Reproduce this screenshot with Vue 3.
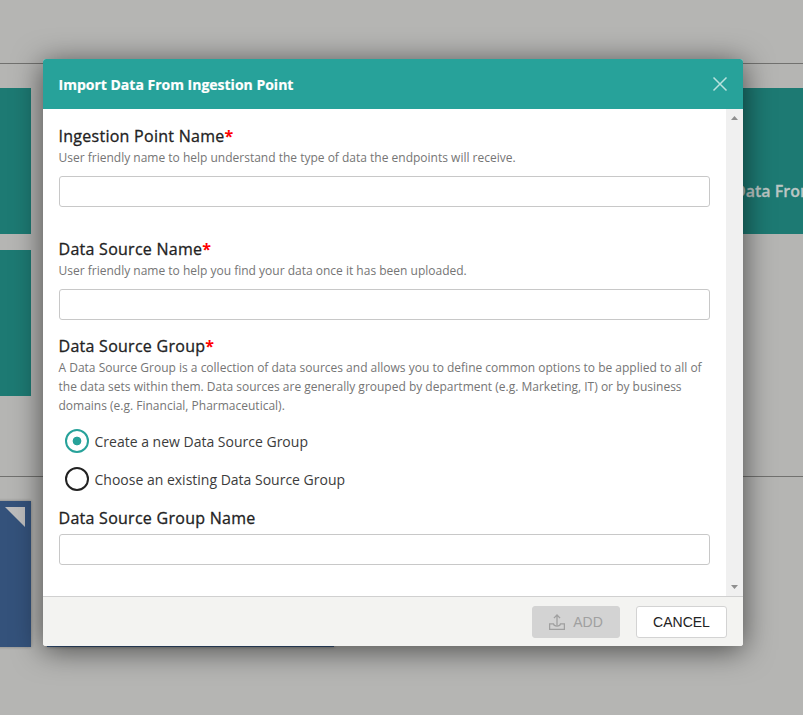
<script setup>
import { ref } from 'vue'

const ingestionName = ref('')
const sourceName = ref('')
const groupName = ref('')
const mode = ref('new')
const options = [
  { value: 'new', label: 'Create a new Data Source Group' },
  { value: 'existing', label: 'Choose an existing Data Source Group' },
]
</script>

<template>
  <div class="screen">
    <div class="page">
      <section class="group first">
        <div class="tiles">
          <div class="tile"></div>
          <div class="tile"></div>
          <div class="tile"></div>
          <div class="tile titled">Data From</div>
          <div class="tile"></div>
        </div>
      </section>
      <section class="group second">
        <div class="tiles">
          <div class="tile blue"><span class="corner"></span></div>
          <div class="tile blue"></div>
        </div>
      </section>
    </div>

    <div class="modal">
      <header class="head">
        <span>Import Data From Ingestion Point</span>
        <svg class="close" width="16" height="16" viewBox="0 0 16 16">
          <path d="M1.5 1.5 L14.5 14.5 M14.5 1.5 L1.5 14.5" fill="none" stroke="#b9e2de" stroke-width="1.5" />
        </svg>
      </header>

      <div class="body">
        <form class="form" @submit.prevent>
          <div class="field ingestion">
            <label class="label">Ingestion Point Name<b class="req">*</b></label>
            <p class="hint">User friendly name to help understand the type of data the endpoints will receive.</p>
            <input v-model="ingestionName" class="input" type="text" />
          </div>
          <div class="field source">
            <label class="label">Data Source Name<b class="req">*</b></label>
            <p class="hint">User friendly name to help you find your data once it has been uploaded.</p>
            <input v-model="sourceName" class="input" type="text" />
          </div>
          <div class="field">
            <label class="label">Data Source Group<b class="req">*</b></label>
            <p class="hint">A Data Source Group is a collection of data sources and allows you to define common options to be applied to all of the data sets within them. Data sources are generally grouped by department (e.g. Marketing, IT) or by business domains (e.g. Financial, Pharmaceutical).</p>
            <div class="radios">
              <div v-for="o in options" :key="o.value" class="radio" :class="{ on: mode === o.value }" @click="mode = o.value">
                <span class="ring"></span>
                <span>{{ o.label }}</span>
              </div>
            </div>
          </div>
          <div class="field name">
            <label class="label">Data Source Group Name</label>
            <input v-model="groupName" class="input" type="text" />
          </div>
        </form>
        <div class="scroll">
          <svg width="7" height="4" viewBox="0 0 7 4"><path d="M0 4 L3.5 0 L7 4 Z" fill="#8f8f8f" /></svg>
          <svg width="7" height="4" viewBox="0 0 7 4"><path d="M0 0 L3.5 4 L7 0 Z" fill="#8f8f8f" /></svg>
        </div>
      </div>

      <footer class="foot">
        <button class="btn add" disabled>
          <svg width="16" height="16" viewBox="0 0 16 16" fill="none" stroke="#a0a0a0" stroke-width="1.3">
            <path d="M8 11 V1.2 M4.9 4.1 L8 1 L11.1 4.1" />
            <path d="M.6 9.9 H4.5 C5 12.7 11 12.7 11.5 9.9 H15.4 V15.3 H.6 Z" />
          </svg>
          <span>ADD</span>
        </button>
        <button class="btn cancel">CANCEL</button>
      </footer>
    </div>
  </div>
</template>

<style>
body {
  margin: 0;
  background: #b5b5b3;
}
</style>

<style scoped>
.screen {
  position: relative;
  width: 803px;
  height: 715px;
  overflow: hidden;
  background: #b5b5b3;
  font-family: "Open Sans", sans-serif;
  color: #222;
}
.page {
  padding-top: 63px;
}
.group {
  border-top: 1px solid #71716f;
  padding-top: 24px;
}
.second {
  margin-top: 80px;
}
.tiles {
  display: grid;
  grid-template-columns: 288px 287px 288px 288px;
  grid-auto-rows: 146px;
  gap: 16px;
  margin-left: -257px;
}
.tile {
  box-sizing: border-box;
  background: #1d7a73;
}
.titled {
  padding: 92px 0 0 80px;
  font-size: 16px;
  line-height: 22px;
  font-weight: 600;
  color: #bcc6c4;
  -webkit-text-stroke: 0.3px #bcc6c4;
}
.blue {
  display: flex;
  justify-content: flex-end;
  padding: 6px;
  background: #34527b;
  box-shadow: 0 0 3px rgba(0, 0, 0, 0.3);
}
.corner {
  width: 20px;
  height: 20px;
  background: #bdbdbd;
  clip-path: polygon(0 0, 100% 0, 100% 100%);
}
.modal {
  position: absolute;
  left: 43px;
  top: 59px;
  width: 700px;
  height: 587px;
  display: flex;
  flex-direction: column;
  border-radius: 3px;
  overflow: hidden;
  background: #fff;
  box-shadow: 0 4px 30px rgba(0, 0, 0, 0.6);
}
.head {
  display: flex;
  align-items: center;
  justify-content: space-between;
  box-sizing: border-box;
  height: 50px;
  padding: 1px 15px 0 15.5px;
  background: #27a29a;
  color: #fff;
  font-size: 14px;
  font-weight: 700;
  -webkit-text-stroke: 0.2px #fff;
}
.close {
  display: block;
  margin-top: -1px;
}
.body {
  flex: 1;
  display: flex;
  min-height: 0;
}
.form {
  flex: 1;
  padding: 15px 16px 0;
}
.field {
  display: flex;
  flex-direction: column;
}
.ingestion {
  margin-bottom: 30px;
}
.source {
  margin-bottom: 14px;
}
.label {
  font-size: 16px;
  line-height: 24px;
  font-weight: 400;
  letter-spacing: 0.27px;
  margin-left: -0.5px;
  -webkit-text-stroke: 0.3px #222;
}
.req {
  color: #f00;
  font-weight: 700;
  -webkit-text-stroke: 0;
}
.hint {
  margin: 0 0 0 -0.5px;
  font-size: 12px;
  line-height: 19px;
  color: #757575;
}
.input {
  box-sizing: border-box;
  width: 651px;
  height: 31px;
  margin-top: 9px;
  padding: 0 8px;
  border: 1px solid #c8c8c8;
  border-radius: 3px;
  background: #fff;
  font: inherit;
  outline: none;
}
.radios {
  display: flex;
  flex-direction: column;
  gap: 14px;
  padding: 14px 6px 0;
}
.radio {
  display: flex;
  align-items: center;
  gap: 5.5px;
  height: 24px;
  font-size: 14px;
  color: #3c3c3c;
}
.ring {
  box-sizing: border-box;
  width: 24px;
  height: 24px;
  border: 2px solid #222;
  border-radius: 50%;
}
.on .ring {
  border-color: #27a29a;
  background: radial-gradient(circle, #27a29a 4px, transparent 4.7px);
}
.name {
  margin-top: 15px;
}
.name .input {
  margin-top: 4px;
}
.scroll {
  box-sizing: border-box;
  width: 17px;
  display: flex;
  flex-direction: column;
  justify-content: space-between;
  align-items: center;
  padding: 7px 0;
  background: #f0f0f0;
}
.foot {
  box-sizing: border-box;
  height: 50px;
  display: flex;
  justify-content: flex-end;
  gap: 16px;
  padding: 9px 16px;
  border-top: 1px solid #d0d0d0;
  background: #f3f3f1;
}
.btn {
  box-sizing: border-box;
  height: 32px;
  display: flex;
  align-items: center;
  justify-content: center;
  padding: 0;
  border: 1px solid #d3d3d3;
  border-radius: 3px;
  font-family: "Liberation Sans", sans-serif;
  font-size: 14px;
}
.add {
  width: 88px;
  gap: 8px;
  background: #d3d3d3;
  color: #a0a0a0;
}
.cancel {
  width: 91px;
  background: #fff;
  color: #222;
}
</style>
